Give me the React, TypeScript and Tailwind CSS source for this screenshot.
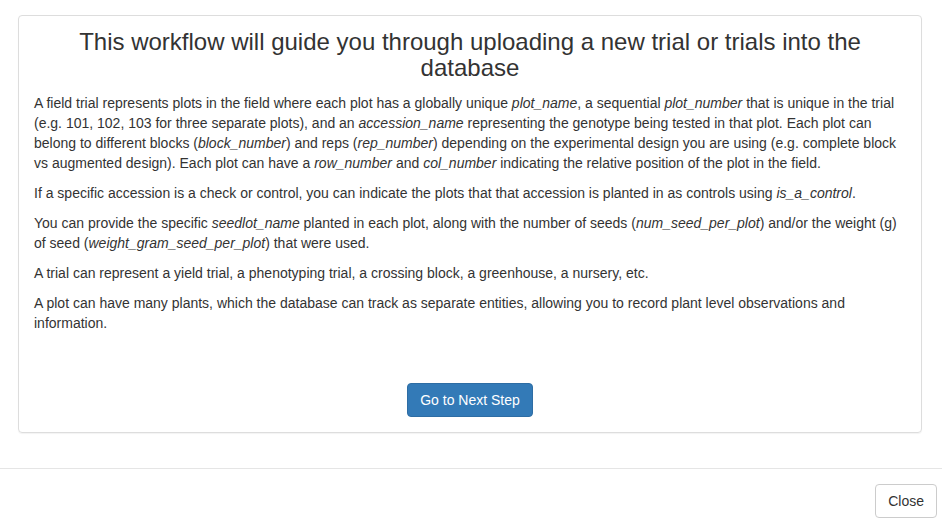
const App = () => {
  return (
    <div
      className="w-[942px] h-[526px] bg-white text-[#333] text-[14px] leading-[20px] overflow-hidden"
      style={{ fontFamily: '"Liberation Sans", Arial, sans-serif' }}
    >
      <div className="pt-[15px] pb-[35px]">
        <div className="ml-[18px] w-[904px] border border-[#ddd] rounded-[4px] shadow-[0_1px_1px_rgba(0,0,0,0.05)] px-[15px] pt-[13px] pb-[15px]">
          <h3 className="text-[24px] leading-[26.4px] text-center mb-[11px]">
            This workflow will guide you through uploading a new trial or trials into the database
          </h3>
          <p className="mb-[10px]">
            A field trial represents plots in the field where each plot has a globally unique <i>plot_name</i>, a sequential{" "}
            <i>plot_number</i> that is unique in the trial (e.g. 101, 102, 103 for three separate plots), and an{" "}
            <i>accession_name</i> representing the genotype being tested in that plot. Each plot can belong to different
            blocks (<i>block_number</i>) and reps (<i>rep_number</i>) depending on the experimental design you are using
            (e.g. complete block vs augmented design). Each plot can have a <i>row_number</i> and <i>col_number</i>{" "}
            indicating the relative position of the plot in the field.
          </p>
          <p className="mb-[10px]">
            If a specific accession is a check or control, you can indicate the plots that that accession is planted in as
            controls using <i>is_a_control</i>.
          </p>
          <p className="mb-[10px]">
            You can provide the specific <i>seedlot_name</i> planted in each plot, along with the number of seeds (
            <i>num_seed_per_plot</i>) and/or the weight (g) of seed (<i>weight_gram_seed_per_plot</i>) that were used.
          </p>
          <p className="mb-[10px]">
            A trial can represent a yield trial, a phenotyping trial, a crossing block, a greenhouse, a nursery, etc.
          </p>
          <p className="mb-[10px]">
            A plot can have many plants, which the database can track as separate entities, allowing you to record plant
            level observations and information.
          </p>
          <div className="flex justify-center pt-[40px]">
            <button className="h-[34px] px-[12px] bg-[#337ab7] border border-[#2e6da4] rounded-[4px] text-white text-[14px]">
              Go to Next Step
            </button>
          </div>
        </div>
      </div>
      <div className="border-t border-[#e5e5e5] flex justify-end pt-[15px] pr-[5px]">
        <button className="h-[34px] px-[12px] bg-white border border-[#ccc] rounded-[4px] text-[#333] text-[14px]">
          Close
        </button>
      </div>
    </div>
  );
};

export default App;
